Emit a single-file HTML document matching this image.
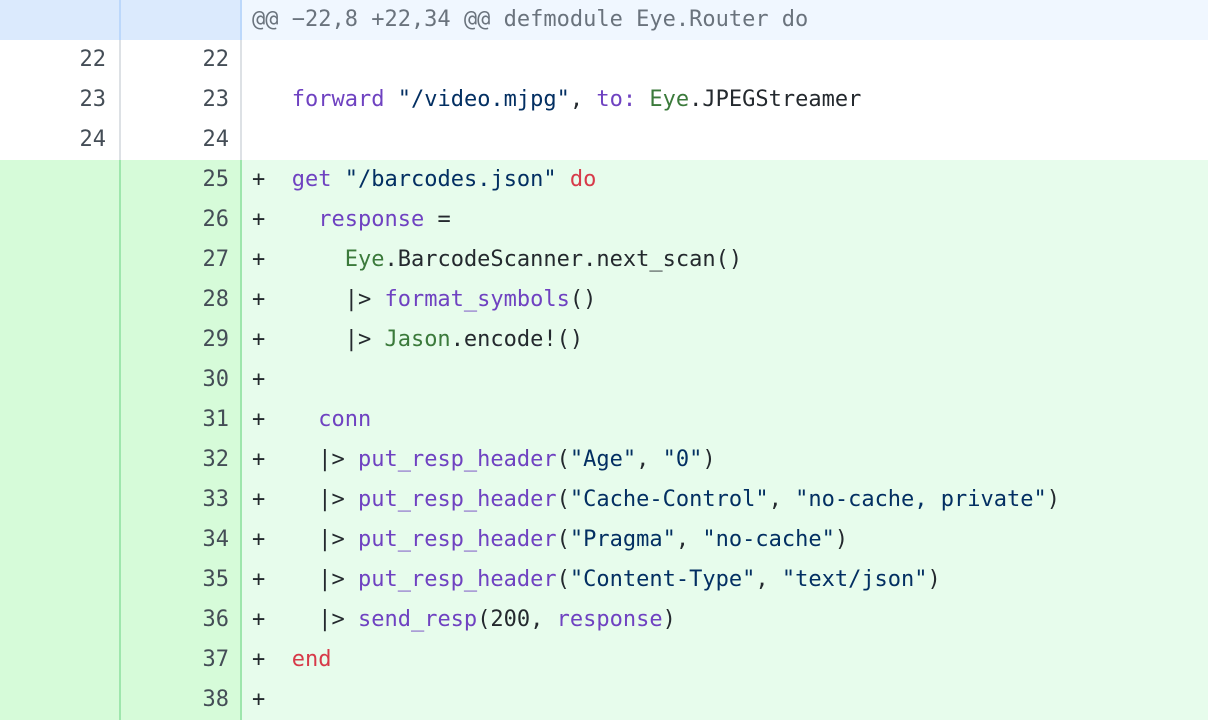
<!DOCTYPE html>
<html><head><meta charset="utf-8"><style>
body{margin:0;width:1208px;height:720px;overflow:hidden;background:#fff;font-family:"DejaVu Sans Mono","Liberation Mono",monospace;font-size:22px;}
.r{position:relative;height:40px;line-height:40px;white-space:pre;}
.g1,.g2{position:absolute;top:0;height:40px;text-align:right;color:#444d56;box-sizing:border-box;}
.g1{left:0;width:121px;padding-right:13px;border-right:2px solid #dde1e5;}
.g2{left:121px;width:121px;padding-right:11px;border-right:2px solid #dde1e5;}
.c{position:absolute;left:252px;top:0;color:#24292e;}
.h .g1,.h .g2{background:#dbeafd;border-right-color:#bcd8fb;}
.h{background:#f0f7ff;}
.h .c{color:#6a737d;}
.a{background:#e7fcec;}
.a .g1,.a .g2{background:#d6fbd9;border-right-color:#9ee6ad;}
.p{color:#6f42c1}.s{color:#032f62}.k{color:#d73a49}.e{color:#3b7a3b}
</style></head><body>
<div class="r h"><div class="g1"></div><div class="g2"></div><div class="c">@@ −22,8 +22,34 @@ defmodule Eye.Router do</div></div>
<div class="r"><div class="g1">22</div><div class="g2">22</div><div class="c"> </div></div>
<div class="r"><div class="g1">23</div><div class="g2">23</div><div class="c">   <span class="p">forward</span> <span class="s">"/video.mjpg"</span>, <span class="p">to:</span> <span class="e">Eye</span>.JPEGStreamer</div></div>
<div class="r"><div class="g1">24</div><div class="g2">24</div><div class="c"> </div></div>
<div class="r a"><div class="g1"></div><div class="g2">25</div><div class="c">+  <span class="p">get</span> <span class="s">"/barcodes.json"</span> <span class="k">do</span></div></div>
<div class="r a"><div class="g1"></div><div class="g2">26</div><div class="c">+    <span class="p">response</span> =</div></div>
<div class="r a"><div class="g1"></div><div class="g2">27</div><div class="c">+      <span class="e">Eye</span>.BarcodeScanner.next_scan()</div></div>
<div class="r a"><div class="g1"></div><div class="g2">28</div><div class="c">+      |&gt; <span class="p">format_symbols</span>()</div></div>
<div class="r a"><div class="g1"></div><div class="g2">29</div><div class="c">+      |&gt; <span class="e">Jason</span>.encode!()</div></div>
<div class="r a"><div class="g1"></div><div class="g2">30</div><div class="c">+</div></div>
<div class="r a"><div class="g1"></div><div class="g2">31</div><div class="c">+    <span class="p">conn</span></div></div>
<div class="r a"><div class="g1"></div><div class="g2">32</div><div class="c">+    |&gt; <span class="p">put_resp_header</span>(<span class="s">"Age"</span>, <span class="s">"0"</span>)</div></div>
<div class="r a"><div class="g1"></div><div class="g2">33</div><div class="c">+    |&gt; <span class="p">put_resp_header</span>(<span class="s">"Cache-Control"</span>, <span class="s">"no-cache, private"</span>)</div></div>
<div class="r a"><div class="g1"></div><div class="g2">34</div><div class="c">+    |&gt; <span class="p">put_resp_header</span>(<span class="s">"Pragma"</span>, <span class="s">"no-cache"</span>)</div></div>
<div class="r a"><div class="g1"></div><div class="g2">35</div><div class="c">+    |&gt; <span class="p">put_resp_header</span>(<span class="s">"Content-Type"</span>, <span class="s">"text/json"</span>)</div></div>
<div class="r a"><div class="g1"></div><div class="g2">36</div><div class="c">+    |&gt; <span class="p">send_resp</span>(200, <span class="p">response</span>)</div></div>
<div class="r a"><div class="g1"></div><div class="g2">37</div><div class="c">+  <span class="k">end</span></div></div>
<div class="r a"><div class="g1"></div><div class="g2">38</div><div class="c">+</div></div>
</body></html>
